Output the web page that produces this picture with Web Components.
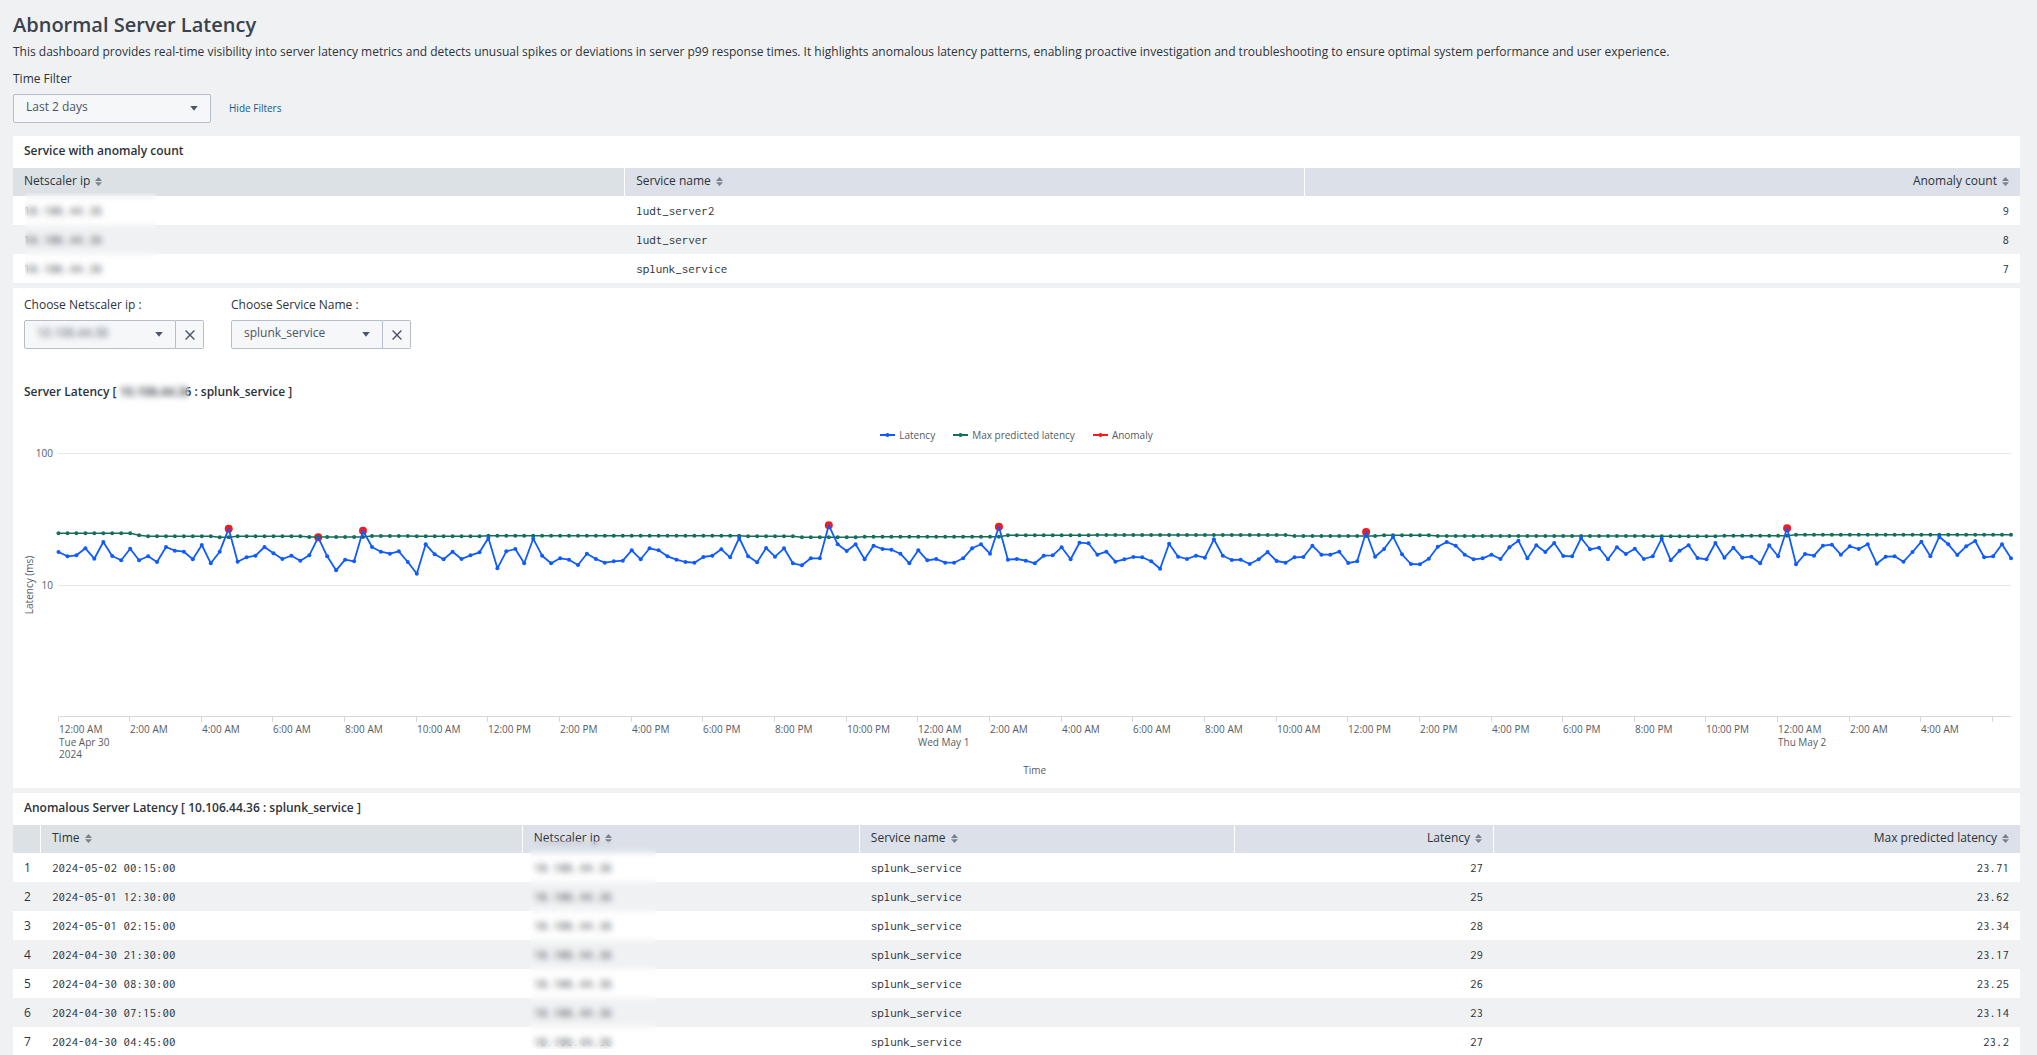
<!DOCTYPE html>
<html lang="en">
<head>
<meta charset="utf-8">
<title>Abnormal Server Latency</title>
<style>
html{scrollbar-width:none}
body{margin:0;background:#f0f1f3;color:#2c333b;font-family:"Open Sans",sans-serif;font-size:12px;line-height:18px;
--mono:"Inconsolata","Noto Sans Mono CJK SC",monospace;--line:#b6beca;--field:#f6f7f9;--text:#2c333b}
</style>
</head>
<body>
<latency-dashboard></latency-dashboard>
<script>
const define = (name, html, setup) => customElements.define(name, class extends HTMLElement {
  connectedCallback() {
    if (this.shadowRoot) return;
    const t = document.createElement('template');
    t.innerHTML = html;
    this.attachShadow({ mode: 'open' }).append(t.content.cloneNode(true));
    if (setup) setup(this, this.shadowRoot);
  }
});

/* Frosted cover laid over private values */
define('privacy-veil', `<style>
:host{position:absolute;display:block;backdrop-filter:blur(3px);pointer-events:none}
</style>`);

define('dash-header', `<style>
:host{display:block}
h1{margin:0;font-size:20px;line-height:28px;font-weight:600;color:#3a424c}
p{margin:4px 0 0}
</style><h1><slot name="title"></slot></h1><p><slot></slot></p>`);

define('dash-panel', `<style>
:host{display:block;background:#fff}
h2{margin:0;padding:6px 11px 8px;font-size:12px;line-height:18px;font-weight:600}
</style><h2><slot name="title"></slot></h2><slot></slot>`);

define('drop-down', `<style>
:host{display:flex;flex-direction:column;gap:6px}
.row{display:flex}
.box{position:relative;display:flex;flex:1;border:1px solid var(--line);border-radius:2px;background:var(--field);height:27px}
:host([clearable]) .box{border-radius:2px 0 0 2px}
select{appearance:none;flex:1;min-width:0;border:0;background:none;font:inherit;line-height:18px;color:#4b5563;padding:0 28px 3px 12px;margin:0}
.arrow{position:absolute;right:12px;top:11px;width:8px;height:5px;pointer-events:none}
button{width:28px;height:29px;padding:0;border:1px solid var(--line);border-left:0;border-radius:0 2px 2px 0;background:var(--field);display:flex;align-items:center;justify-content:center}
button svg{width:10px;height:10px}
privacy-veil{left:8px;right:36px;top:2px;bottom:2px}
</style><label for="s"></label>
<div class="row"><div class="box"><select id="s"><option></option></select>
<svg class="arrow" viewBox="0 0 8 5"><path d="M0.3 0H7.7L4 4.8Z" fill="#4b5563"/></svg></div></div>`,
(el, r) => {
  r.querySelector('label').textContent = el.getAttribute('label');
  r.querySelector('option').textContent = el.getAttribute('value');
  if (el.hasAttribute('private')) r.querySelector('.box').append(document.createElement('privacy-veil'));
  if (el.hasAttribute('clearable')) r.querySelector('.row').insertAdjacentHTML('beforeend',
    '<button type="button" aria-label="Clear"><svg viewBox="0 0 10 10"><path d="M0.6 0.6L9.4 9.4M9.4 0.6L0.6 9.4" stroke="#4b5563" stroke-width="1.4" fill="none"/></svg></button>');
});

define('data-table', `<style>
:host{display:block;position:relative}
table{width:100%;border-collapse:separate;border-spacing:0;table-layout:fixed}
th{height:28px;box-sizing:border-box;padding:0 11px 2px;text-align:left;background:#dce0e8;border-right:1px solid #fff;font-weight:400}
th:last-child{border-right:0}
th.lead{background:#dce1e5}
.r{text-align:right}
th button{all:unset;display:inline-flex;align-items:center;gap:5px;cursor:pointer}
th svg{width:7px;height:9px}
td{height:29px;box-sizing:border-box;padding:0 11px;font-family:var(--mono);font-size:13px}
td.n{font-family:"Open Sans",sans-serif;font-size:12px}
tbody tr:nth-child(even){background:#f0f1f3}
</style><table><colgroup></colgroup><thead><tr></tr></thead><tbody></tbody></table><slot></slot>`,
(el, r) => {
  const d = TABLES[el.getAttribute('source')];
  const cls = (c, extra) => [c.right ? 'r' : '', extra].join(' ').trim();
  r.querySelector('colgroup').innerHTML = d.cols.map(c => `<col style="width:${c.w}">`).join('');
  r.querySelector('thead tr').innerHTML = d.cols.map((c, i) => `<th class="${cls(c, i < d.lead ? 'lead' : '')}">` + (c.name ?
    `<button>${c.name}<svg viewBox="0 0 7 9"><path d="M0 3.9L3.5 0L7 3.9ZM0 5.2H7L3.5 9Z" fill="#77828d"/></svg></button>` : '') + '</th>').join('');
  r.querySelector('tbody').innerHTML = d.rows.map(row => '<tr>' + row.map((v, i) =>
    `<td class="${cls(d.cols[i], d.cols[i].name ? '' : 'n')}">${v}</td>`).join('') + '</tr>').join('');
});

define('chart-legend', `<style>
:host{display:flex;justify-content:center;gap:18px;font-size:10px;color:#555b63}
span{display:flex;align-items:center;gap:4px}
svg{width:15px;height:6px}
</style>` + [['Latency', '#0f5bff'], ['Max predicted latency', '#146e5b'], ['Anomaly', '#f8191c']].map(([n, c]) =>
`<span><svg viewBox="0 0 15 6"><path d="M0 3H15" stroke="${c}" stroke-width="2"/><circle cx="7.5" cy="3" r="2" fill="${c}"/></svg>${n}</span>`).join(''));

define('latency-chart', `<style>
:host{display:block;height:344px}
svg{display:block;width:100%;height:100%}
text{font-size:10px;fill:#555b63}
</style><svg role="img" aria-label="Server latency over time"></svg>`,
(el, r) => {
  const svg = r.querySelector('svg');
  const draw = () => {
    const W = el.clientWidth, L = 45.5, R = W - 9, step = (R - L) / 218;
    const X = i => L + i * step, Y = v => 56 + v / 3;
    const path = a => 'M' + a.map((v, i) => X(i).toFixed(1) + ' ' + Y(v).toFixed(1)).join('L');
    const dots = (a, c) => a.map((v, i) => `<circle cx="${X(i).toFixed(1)}" cy="${Y(v).toFixed(1)}" r="2" fill="${c}"/>`).join('');
    let h = `<path d="M${L} 9.5H${R}M${L} 141.5H${R}" stroke="#e6e8ea"/><path d="M${L} 272.5H${R}" stroke="#d5d8dc"/>`;
    const days = { 0: ['Tue Apr 30', '2024'], 96: ['Wed May 1'], 192: ['Thu May 2'] };
    for (let i = 0; i <= 216; i += 8) {
      const x = Math.round(X(i));
      h += `<path d="M${x - .5} 273V278" stroke="#d5d8dc"/>`;
      if (i === 216) continue;
      const hr = (i / 4) % 24;
      h += `<text x="${x}" y="289">${hr % 12 || 12}:00 ${hr < 12 ? 'AM' : 'PM'}</text>`;
      (days[i] || []).forEach((t, k) => h += `<text x="${x}" y="${302 + 12 * k}">${t}</text>`);
    }
    h += `<text x="40" y="13" text-anchor="end">100</text><text x="40" y="145" text-anchor="end">10</text>
      <text x="${(L + R) / 2}" y="330" text-anchor="middle">Time</text>
      <text transform="translate(20 141) rotate(-90)" text-anchor="middle">Latency (ms)</text>`;
    h += [19, 29, 34, 86, 105, 146, 193].map(i => `<circle cx="${X(i).toFixed(1)}" cy="${Y(LATENCY[i]).toFixed(1)}" r="4" fill="#f8191c"/>`).join('');
    h += `<path d="${path(PREDICTED)}" fill="none" stroke="#146e5b" stroke-width="1.6"/>` + dots(PREDICTED, '#146e5b');
    const top = LATENCY.map((v, i) => `<circle cx="${X(i).toFixed(1)}" cy="${Y(v).toFixed(1)}" r="${v < 115 && PREDICTED[i] - v > -4 ? 1 : 2}" fill="#0f5bff"/>`).join('');
    h += `<path d="${path(LATENCY)}" fill="none" stroke="#0f5bff" stroke-width="1.8" stroke-linejoin="round"/>` + top;
    svg.innerHTML = h;
  };
  draw();
  new ResizeObserver(draw).observe(el);
});

/* Series samples, one per 15 minutes, as thirds of a pixel below the plot's reference line */
const LATENCY = [156,169,166,145,176,126,168,181,146,181,169,186,141,152,155,178,135,190,155,86,185,172,167,141,160,177,167,182,166,112,169,211,179,184,92,141,155,161,154,186,221,133,163,178,155,177,166,157,114,205,154,147,190,116,
167,190,175,179,195,161,177,188,184,182,151,178,145,151,169,179,186,188,171,167,148,172,114,169,187,144,170,145,190,196,175,175,76,133,153,133,178,137,147,149,161,190,151,181,177,188,188,175,145,133,161,80,179,177,182,
190,167,166,142,178,128,130,164,155,185,178,171,172,184,206,131,170,177,167,173,118,167,180,179,192,178,156,183,188,172,171,137,164,164,155,189,184,96,170,147,110,163,192,193,176,140,126,137,164,178,175,164,177,142,122,
175,136,156,129,168,169,114,148,143,178,142,162,146,177,169,116,181,152,136,174,178,129,173,143,173,170,190,136,169,85,193,162,167,137,134,164,139,147,133,191,170,169,185,156,125,169,110,133,165,139,123,172,169,133,175];
const PREDICTED = [[9,100],[1,106],[8,109],[2,112],[8,109],[7,111],[5,108],[8,109],[29,107],[6,109],[7,112],[16,110],[10,106],[22,105],[10,108],[6,106],[24,108],[8,109],[8,107],[25,104]].flatMap(([n, v]) => Array(n).fill(v));

const IP = '10.106.44.36';
const TABLES = {
  counts: { lead: 1, cols: [{ name: 'Netscaler ip', w: '30.5%' }, { name: 'Service name', w: '33.9%' }, { name: 'Anomaly count', w: 'auto', right: 1 }],
    rows: [[IP, 'ludt_server2', 9], [IP, 'ludt_server', 8], [IP, 'splunk_service', 7]] },
  anomalies: { lead: 2, cols: [{ name: '', w: '28px' }, { name: 'Time', w: '24%' }, { name: 'Netscaler ip', w: '16.8%' }, { name: 'Service name', w: '18.7%' }, { name: 'Latency', w: '12.9%', right: 1 }, { name: 'Max predicted latency', w: 'auto', right: 1 }],
    rows: [['2024-05-02 00:15:00', 27, '23.71'], ['2024-05-01 12:30:00', 25, '23.62'], ['2024-05-01 02:15:00', 28, '23.34'], ['2024-04-30 21:30:00', 29, '23.17'], ['2024-04-30 08:30:00', 26, '23.25'], ['2024-04-30 07:15:00', 23, '23.14'], ['2024-04-30 04:45:00', 27, '23.2']]
      .map(([t, l, m], i) => [i + 1, t, IP, 'splunk_service', l, m]) }
};

define('latency-dashboard', `<style>
:host{display:flex;flex-direction:column;gap:5px;padding:11px 17px 0 13px}
.filters{display:flex;align-items:flex-end;gap:18px;margin:4px 0 8px}
.filters drop-down{width:198px}
a{font-size:10px;line-height:29px;color:#15598f;text-decoration:none}
.chart{background:#fff;padding-top:8px}
.inputs{display:flex;gap:27px;padding:0 11px}
.inputs drop-down{width:180px}
h2{margin:34px 11px 25px;font-size:12px;line-height:18px;font-weight:600}
.hidden{position:relative}
.hidden privacy-veil{left:-3px;right:2px;top:-3px;bottom:-3px}
.v1{left:12px;width:131px;top:25px;bottom:1px}
.v2{left:calc(25.8% - 1px);width:126px;top:16px;bottom:7px}
</style>
<dash-header><span slot="title">Abnormal Server Latency</span>This dashboard provides real-time visibility into server latency metrics and detects unusual spikes or deviations in server p99 response times. It highlights anomalous latency patterns, enabling proactive investigation and troubleshooting to ensure optimal system performance and user experience.</dash-header>
<div class="filters"><drop-down label="Time Filter" value="Last 2 days"></drop-down><a href="#">Hide Filters</a></div>
<dash-panel><span slot="title">Service with anomaly count</span>
<data-table source="counts"><privacy-veil class="v1"></privacy-veil></data-table></dash-panel>
<section class="chart">
<div class="inputs"><drop-down label="Choose Netscaler ip :" value="10.106.44.36" clearable private></drop-down><drop-down label="Choose Service Name :" value="splunk_service" clearable></drop-down></div>
<h2>Server Latency [ <span class="hidden">10.106.44.36<privacy-veil></privacy-veil></span> : splunk_service ]</h2>
<chart-legend></chart-legend>
<latency-chart></latency-chart>
</section>
<dash-panel><span slot="title">Anomalous Server Latency [ 10.106.44.36 : splunk_service ]</span>
<data-table source="anomalies"><privacy-veil class="v2"></privacy-veil></data-table></dash-panel>`);
</script>
</body>
</html>
